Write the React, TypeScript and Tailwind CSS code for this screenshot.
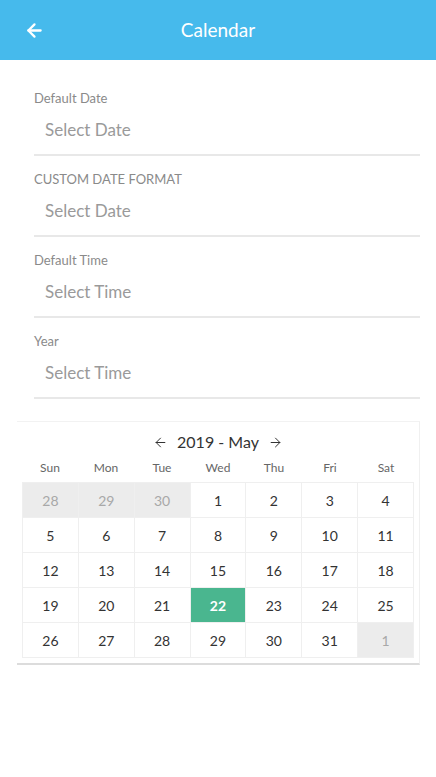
import React from "react";
import { ArrowLeft, ArrowRight } from "lucide-react";

const fields = [
  { label: "Default Date", placeholder: "Select Date" },
  { label: "CUSTOM DATE FORMAT", placeholder: "Select Date" },
  { label: "Default Time", placeholder: "Select Time" },
  { label: "Year", placeholder: "Select Time" },
];

const weekdays = ["Sun", "Mon", "Tue", "Wed", "Thu", "Fri", "Sat"];

type Day = { n: number; muted?: boolean; active?: boolean };

const days: Day[] = [
  { n: 28, muted: true },
  { n: 29, muted: true },
  { n: 30, muted: true },
  ...Array.from({ length: 31 }, (_, i) => ({ n: i + 1, active: i + 1 === 22 })),
  { n: 1, muted: true },
];

export default function App() {
  return (
    <div className="min-h-[777px] bg-white font-['Lato','Open_Sans',sans-serif]">
      <header className="grid h-[60px] grid-cols-[60px_1fr_60px] items-center bg-[#46baec] text-white">
        <div className="pl-[24px]">
          <ArrowLeft size={21} strokeWidth={2.6} />
        </div>
        <h1 className="text-center text-[19px]">Calendar</h1>
        <div />
      </header>

      <div className="pl-[34px] pr-[16px] pt-[15px]">
        {fields.map((f) => (
          <div key={f.label} className="pt-[15px]">
            <p className="h-[16px] text-[13px] leading-[16px] text-[#8a8a8a]">{f.label}</p>
            <div className="flex h-[50px] items-center border-b-2 border-[#e8e8e8] pl-[11px] text-[17px] text-[#9a9a9a]">
              {f.placeholder}
            </div>
          </div>
        ))}
      </div>

      <div className="ml-[17px] mr-[16px] mt-[22px] border-r border-t border-b-2 border-r-[#f0f0f0] border-t-[#f2f2f2] border-b-[#dcdcdc] px-[5px] pb-[5px]">
        <div className="mt-[8px] flex h-[24px] items-center justify-center gap-[9px] text-[16px] text-[#333]">
          <ArrowLeft size={15} strokeWidth={1.6} />
          <span>2019 - May</span>
          <ArrowRight size={15} strokeWidth={1.6} />
        </div>
        <div className="grid h-[28px] grid-cols-7 items-center text-center text-[12px] text-[#666]">
          {weekdays.map((w) => (
            <span key={w}>{w}</span>
          ))}
        </div>
        <div className="grid grid-cols-7 border-l border-t border-[#efefef]">
          {days.map((d, i) => (
            <div
              key={i}
              className={
                "flex h-[35px] items-center justify-center border-b border-r border-[#efefef] text-[14px] " +
                (d.active
                  ? "bg-[#4ab68f] font-bold text-white"
                  : d.muted
                    ? "bg-[#ececec] text-[#a8a8a8]"
                    : "text-[#333]")
              }
            >
              {d.n}
            </div>
          ))}
        </div>
      </div>
    </div>
  );
}
